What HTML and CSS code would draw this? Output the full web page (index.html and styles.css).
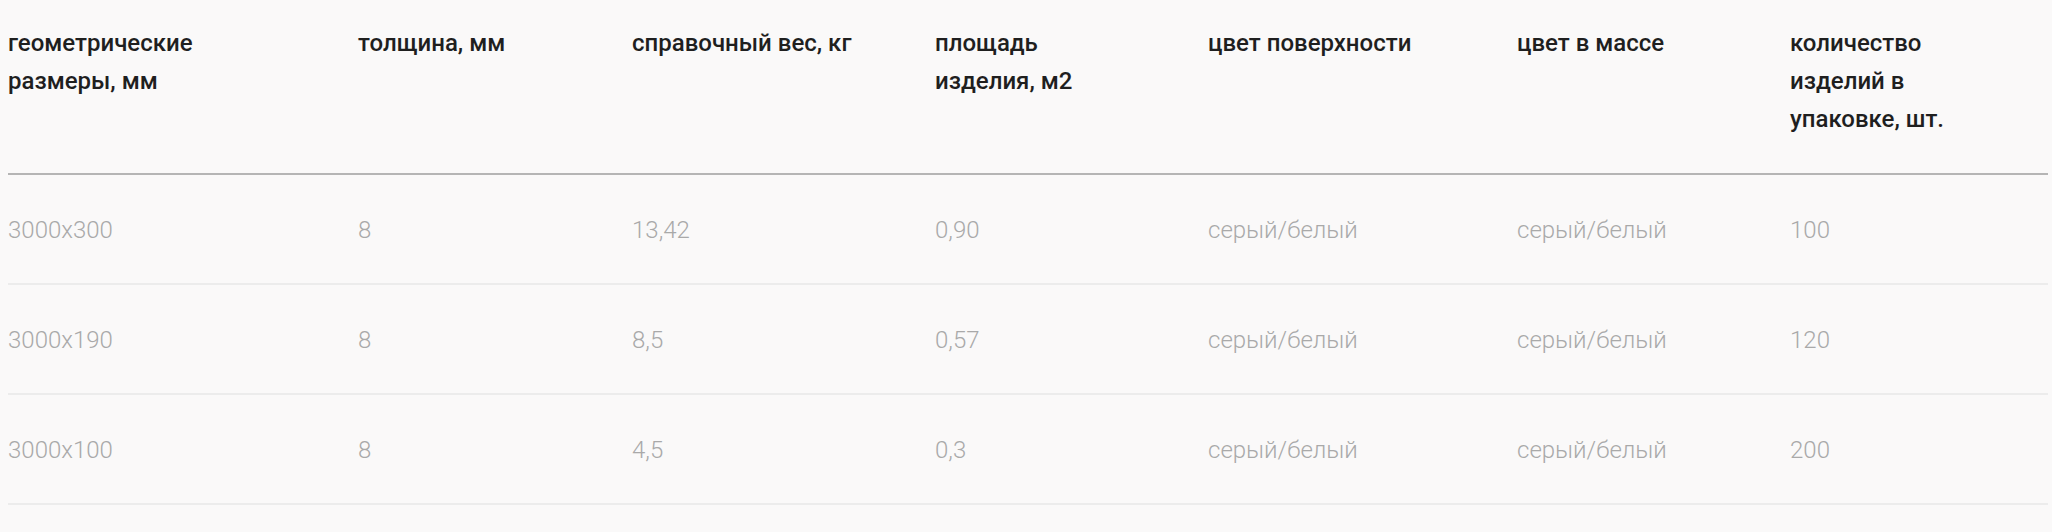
FILE: index.html
```html
<!DOCTYPE html>
<html lang="ru">
<head>
<meta charset="utf-8">
<title>Характеристики</title>
<link rel="stylesheet" href="styles.css">
</head>
<body>
<table class="spec">
  <colgroup>
    <col class="c1"><col class="c2"><col class="c3"><col class="c4"><col class="c5"><col class="c6"><col class="c7">
  </colgroup>
  <thead>
    <tr>
      <th>геометрические размеры, мм</th>
      <th>толщина, мм</th>
      <th>справочный вес, кг</th>
      <th>площадь изделия, м2</th>
      <th>цвет поверхности</th>
      <th>цвет в массе</th>
      <th>количество изделий в упаковке, шт.</th>
    </tr>
  </thead>
  <tbody>
    <tr><td>3000x300</td><td>8</td><td>13,42</td><td>0,90</td><td>серый/белый</td><td>серый/белый</td><td>100</td></tr>
    <tr><td>3000x190</td><td>8</td><td>8,5</td><td>0,57</td><td>серый/белый</td><td>серый/белый</td><td>120</td></tr>
    <tr><td>3000x100</td><td>8</td><td>4,5</td><td>0,3</td><td>серый/белый</td><td>серый/белый</td><td>200</td></tr>
  </tbody>
</table>
</body>
</html>
```
FILE: styles.css
```css
html, body {
  background: #faf9f9;
}
body {
  margin: 8px 4px 0 8px;
  font-family: Roboto, "Noto Sans", sans-serif;
}
.spec {
  width: 2040px;
  border-collapse: collapse;
  table-layout: fixed;
}
.c1 { width: 350px; }
.c2 { width: 274px; }
.c3 { width: 303px; }
.c4 { width: 273px; }
.c5 { width: 309px; }
.c6 { width: 273px; }
.c7 { width: 258px; }
.spec th {
  text-align: left;
  vertical-align: top;
  font-weight: 500;
  font-size: 24px;
  line-height: 38px;
  color: #1f1f1f;
  padding: 16px 72px 35px 0;
  border-bottom: 2px solid #b5b5b5;
}
.spec td {
  font-weight: 300;
  font-size: 24px;
  line-height: 28px;
  color: #a9a9a9;
  padding: 1px 0 0 0;
  height: 107px;
  vertical-align: middle;
  border-bottom: 2px solid #ececec;
}
```
